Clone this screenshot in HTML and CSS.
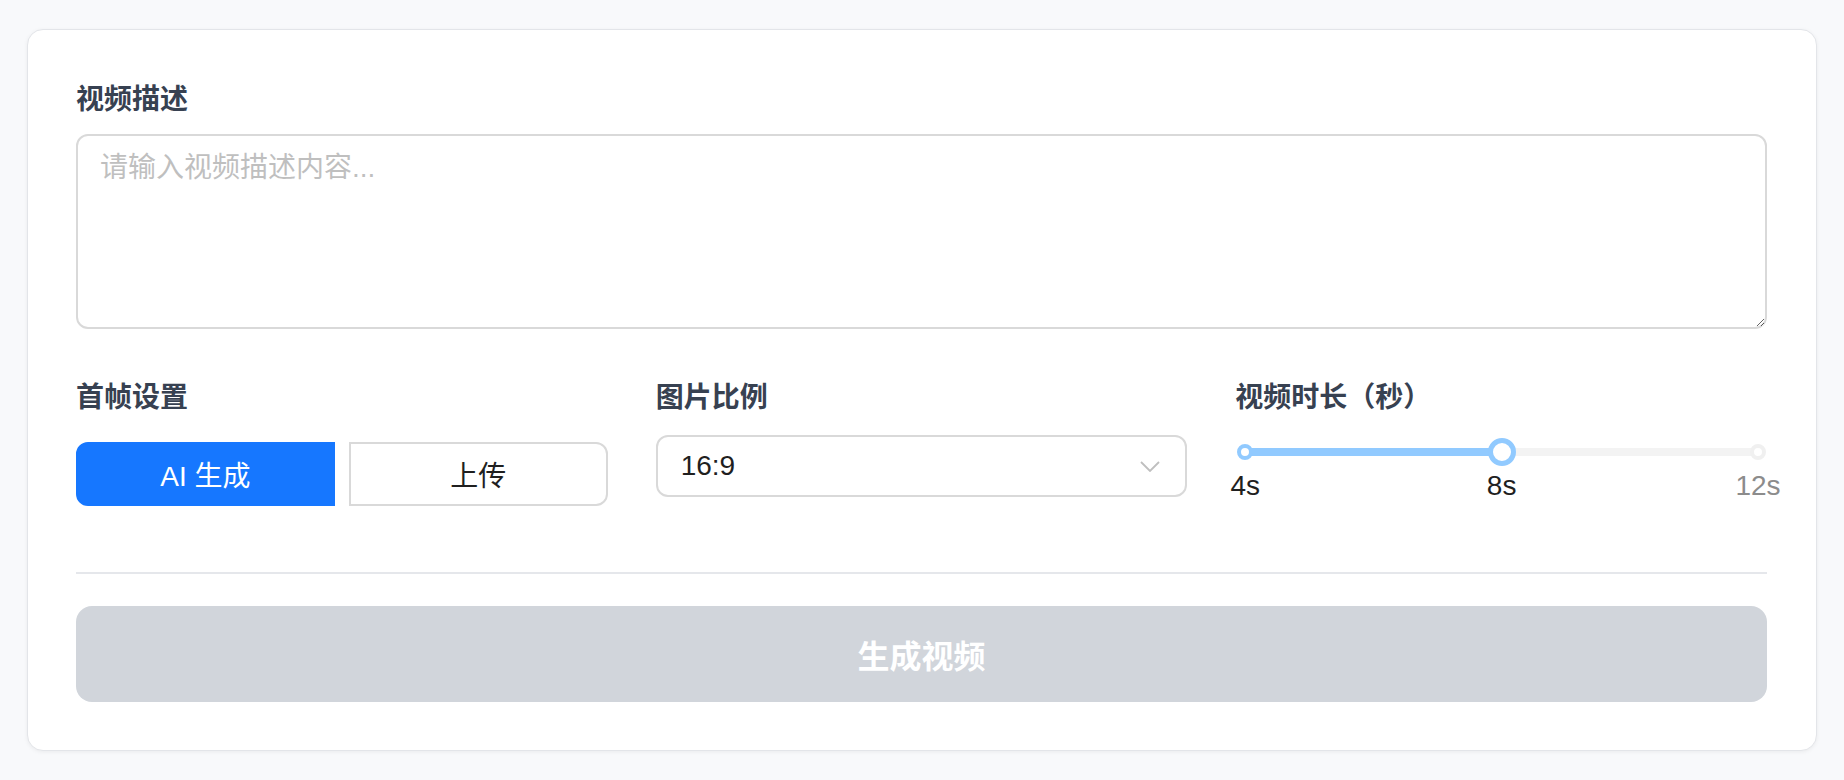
FILE: index.html
```html
<!doctype html>
<html lang="zh-CN">
  <head>
    <meta charset="UTF-8" />
    <meta name="viewport" content="width=device-width, initial-scale=1.0" />
    <title>生成视频</title>
    <link rel="stylesheet" href="styles.css">
  </head>
  <body>
    <div class="card">
      <div class="label">视频描述</div>
      <textarea class="desc" placeholder="请输入视频描述内容..."></textarea>

      <div class="options">
        <div class="col">
          <div class="label">首帧设置</div>
          <div class="seg">
            <button class="seg-btn active">AI 生成</button>
            <button class="seg-btn">上传</button>
          </div>
        </div>

        <div class="col">
          <div class="label">图片比例</div>
          <div class="select">
            <span>16:9</span>
            <svg width="20" height="11" viewBox="0 0 20 11">
              <path d="M1 1 L10 10 L19 1" fill="none" stroke="#bfbfbf" stroke-width="1.8" />
            </svg>
          </div>
        </div>

        <div class="col">
          <div class="label">视频时长（秒）</div>
          <div class="slider">
            <div class="rail"></div>
            <div class="track" style="width: 50%"></div>
            <span class="dot on" style="left: 0%"></span>
            <span class="dot" style="left: 100%"></span>
            <span class="handle" style="left: 50%"></span>
          </div>
          <div class="marks">
            <span class="mark on" style="left: 0%">4s</span>
            <span class="mark on" style="left: 50%">8s</span>
            <span class="mark" style="left: 100%">12s</span>
          </div>
        </div>
      </div>

      <div class="divider"></div>

      <button class="generate" disabled>生成视频</button>
    </div>
  </body>
</html>
```

FILE: styles.css
```css
body {
  margin: 0;
  padding: 29px 27px;
  background: #f8f9fb;
  font-family: "Liberation Sans", "Noto Sans CJK SC", sans-serif;
  color: #1f1f1f;
}
.card {
  background: #fff;
  border: 1px solid #e3e5e9;
  border-radius: 16px;
  box-shadow: 0 1px 4px rgba(0, 0, 0, 0.06);
  padding: 48px 49px 48px 48px;
}
.label {
  font-size: 28px;
  line-height: 44px;
  font-weight: bold;
  color: #374151;
}
.desc {
  display: block;
  box-sizing: border-box;
  width: 100%;
  height: 195px;
  margin: 12px 0 0;
  padding: 10px 22px;
  border: 2px solid #d9d9d9;
  border-radius: 12px;
  font-family: inherit;
  font-size: 28px;
  line-height: 44px;
  color: #1f1f1f;
  outline: none;
  resize: vertical;
}
.desc::placeholder {
  color: #bfbfbf;
}
.options {
  display: grid;
  grid-template-columns: repeat(3, 1fr);
  gap: 48px;
  margin-top: 47px;
}
.seg {
  display: flex;
  gap: 14px;
  margin-top: 22px;
}
.seg-btn {
  flex: 1;
  height: 64px;
  box-sizing: border-box;
  border: 2px solid #d9d9d9;
  border-radius: 0 12px 12px 0;
  background: #fff;
  font-family: inherit;
  font-size: 28px;
  color: #1f1f1f;
  cursor: pointer;
}
.seg-btn.active {
  background: #1677ff;
  border-color: #1677ff;
  border-radius: 12px 0 0 12px;
  color: #fff;
}
.select {
  display: flex;
  align-items: center;
  justify-content: space-between;
  box-sizing: border-box;
  height: 62px;
  margin-top: 15px;
  padding: 0 25px 0 23px;
  border: 2px solid #d9d9d9;
  border-radius: 12px;
  font-size: 28px;
}
.slider {
  position: relative;
  height: 28px;
  margin: 18px 9px 0 10px;
}
.rail,
.track {
  position: absolute;
  left: 0;
  top: 10px;
  height: 8px;
  border-radius: 4px;
}
.rail {
  right: 0;
  background: #f3f3f3;
}
.track {
  background: #91caff;
}
.dot,
.handle {
  position: absolute;
  box-sizing: border-box;
  border-radius: 50%;
  background: #fff;
  transform: translate(-50%, -50%);
  top: 14px;
}
.dot {
  width: 16px;
  height: 16px;
  border: 4px solid #f0f0f0;
}
.dot.on {
  border-color: #91caff;
}
.handle {
  width: 28px;
  height: 28px;
  border: 5px solid #91caff;
}
.marks {
  position: relative;
  height: 40px;
  margin: 0 9px 0 10px;
}
.mark {
  position: absolute;
  top: 0;
  transform: translateX(-50%);
  font-size: 28px;
  line-height: 40px;
  color: #8c8c8c;
}
.mark.on {
  color: #1f1f1f;
}
.divider {
  height: 2px;
  margin-top: 66px;
  background: #e5e7eb;
}
.generate {
  display: block;
  width: 100%;
  height: 96px;
  margin-top: 32px;
  border: none;
  border-radius: 16px;
  background: #d1d5db;
  font-family: inherit;
  font-size: 32px;
  font-weight: bold;
  color: #fff;
}
```
